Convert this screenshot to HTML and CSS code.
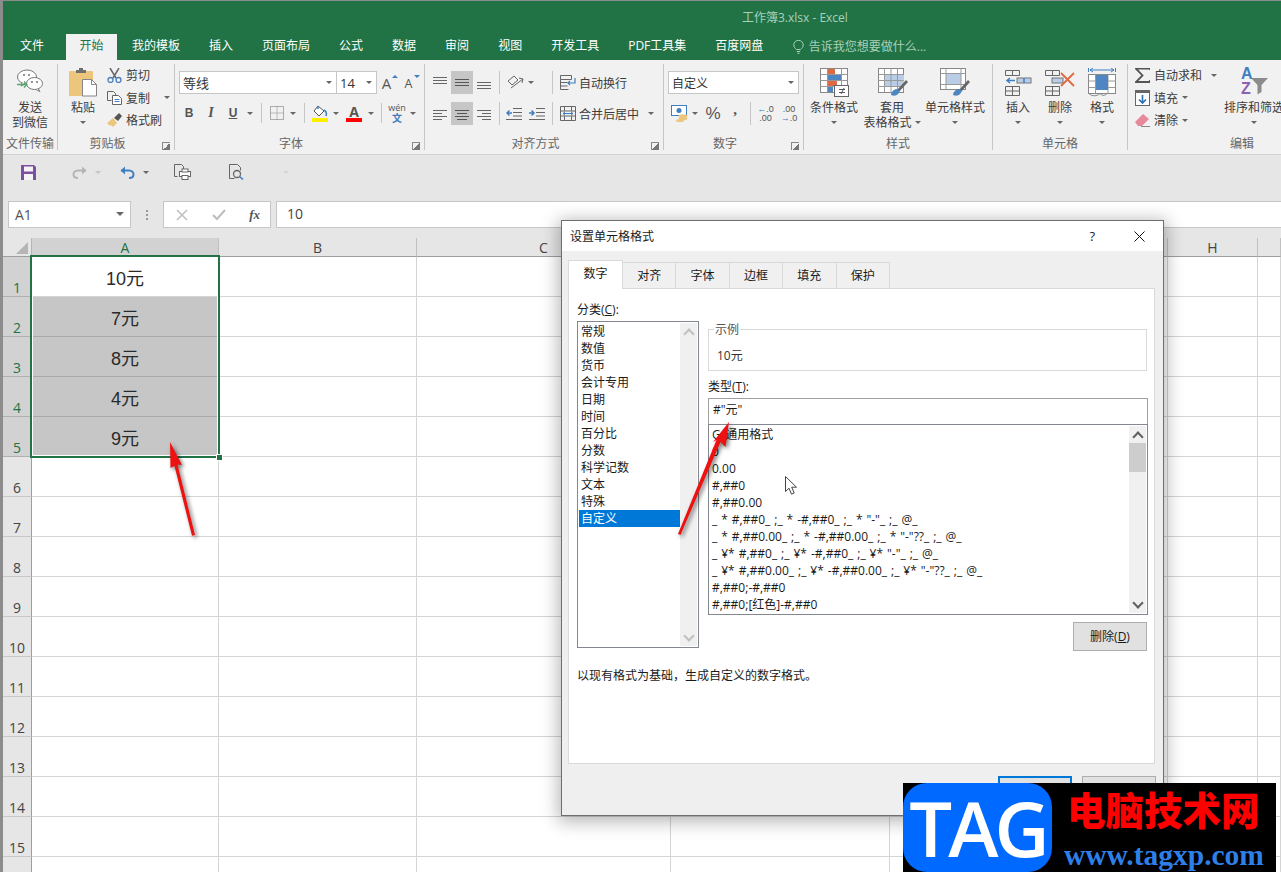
FILE: index.html
```html
<!DOCTYPE html>
<html lang="zh">
<head>
<meta charset="utf-8">
<title>工作簿3.xlsx - Excel</title>
<link rel="stylesheet" href="styles.css">
</head>
<body>
<svg class="sprite" width="0" height="0">
  <symbol id="al-top" viewBox="0 0 14 14"><path d="M0 1.5h14M0 4.5h14M0 7.5h14" stroke="#666" fill="none"/></symbol>
  <symbol id="al-mid" viewBox="0 0 14 14"><path d="M0 3.5h14M0 6.5h14M0 9.5h14" stroke="#555" fill="none"/></symbol>
  <symbol id="al-bot" viewBox="0 0 14 14"><path d="M0 6.5h14M0 9.5h14M0 12.5h14" stroke="#666" fill="none"/></symbol>
  <symbol id="h-left" viewBox="0 0 14 14"><path d="M0 1.5h14M0 4.5h9M0 7.5h14M0 10.5h9" stroke="#666" fill="none"/></symbol>
  <symbol id="h-mid" viewBox="0 0 14 14"><path d="M0 1.5h14M2 4.5h10M0 7.5h14M2 10.5h10" stroke="#555" fill="none"/></symbol>
  <symbol id="h-right" viewBox="0 0 14 14"><path d="M0 1.5h14M5 4.5h9M0 7.5h14M5 10.5h9" stroke="#666" fill="none"/></symbol>
</svg>

<header class="titlebar">工作簿3.xlsx - Excel</header>
<nav class="tabs">
  <span class="tab tab-file">文件</span>
  <span class="tab tab-on">开始</span>
  <span class="tab">我的模板</span>
  <span class="tab">插入</span>
  <span class="tab">页面布局</span>
  <span class="tab">公式</span>
  <span class="tab">数据</span>
  <span class="tab">审阅</span>
  <span class="tab">视图</span>
  <span class="tab">开发工具</span>
  <span class="tab">PDF工具集</span>
  <span class="tab">百度网盘</span>
  <span class="tell">
    <svg width="11" height="14" viewBox="0 0 11 14"><path d="M3.5 9.5C1.5 8 .8 6.5.8 5a4.7 4.7 0 0 1 9.4 0c0 1.5-.7 3-2.7 4.500zM3.800 11.500h3.400M4.500 13.300h2" fill="none" stroke="#a9d0ba"/></svg>
    <span>告诉我您想要做什么...</span>
  </span>
</nav>

<section class="ribbon">
  <div class="group g1">
    <div class="g-body">
      <div class="big w-54">
        <div class="big-icon">
          <svg width="28" height="26" viewBox="0 0 28 26"><ellipse cx="11" cy="8" rx="9.500" ry="7" fill="#fff" stroke="#777"/><path d="M6 14l-1 3 4-2" fill="#fff" stroke="#777"/><ellipse cx="18.500" cy="14.500" rx="8" ry="6" fill="#fff" stroke="#777"/><path d="M22 19.500l2 3-4-2" fill="#fff" stroke="#777"/><circle cx="8" cy="6" r=".9" fill="#666"/><circle cx="13" cy="6" r=".9" fill="#666"/><circle cx="16" cy="13" r=".9" fill="#666"/><circle cx="21" cy="13" r=".9" fill="#666"/><path d="M1 15.500h10M8 12.500l3 3-3 3" fill="none" stroke="#5aa86e" stroke-width="1.300"/></svg>
        </div>
        <span class="lbl">发送</span><span class="lbl">到微信</span>
      </div>
    </div>
    <div class="g-name">文件传输</div>
  </div>

  <div class="group g2">
    <div class="g-body g2-body">
      <div class="big w-42">
        <div class="big-icon">
          <svg width="30" height="30" viewBox="0 0 30 30"><rect x="1" y="4" width="24" height="25" rx="1" fill="#edc67e"/><path d="M8 6V3h3V1h4v2h3v3z" fill="#6f6f6f"/><path d="M14.500 12.500h9l5 5v11.500h-14z" fill="#fff" stroke="#858585"/><path d="M23.500 12.500v5h5" fill="none" stroke="#858585"/></svg>
        </div>
        <span class="lbl">粘贴</span><i class="caret big-caret"></i>
      </div>
      <div class="mini-col">
        <div class="mini"><span class="mini-ic"><svg width="15" height="15" viewBox="0 0 15 15"><path d="M3 0l6 10M12 0L6 10" stroke="#666" stroke-width="1.500" fill="none"/><circle cx="3.500" cy="12" r="2.500" fill="none" stroke="#4a80bd" stroke-width="1.300"/><circle cx="11.500" cy="12" r="2.500" fill="none" stroke="#4a80bd" stroke-width="1.300"/></svg></span><span>剪切</span></div>
        <div class="mini"><span class="mini-ic"><svg width="15" height="14" viewBox="0 0 15 14"><path d="M.5.500h6l2 2v2M.5.500v9h4" fill="none" stroke="#666"/><path d="M5.500 4.500h6l3 3v6h-9z" fill="#fff" stroke="#666"/><path d="M7.500 8.500h5M7.500 10.500h5" stroke="#4a80bd"/></svg></span><span>复制</span><i class="caret caret-copy"></i></div>
        <div class="mini"><span class="mini-ic"><svg width="15" height="14" viewBox="0 0 15 14"><path d="M0 10l6-5 4 5-4 4-2-2-1 1z" fill="#edc67e"/><path d="M7 5l5-5 3 3-4 5z" fill="#555"/></svg></span><span>格式刷</span></div>
      </div>
    </div>
    <div class="g-name">剪贴板<i class="launch"></i></div>
  </div>

  <div class="group g3">
    <div class="g-body col pad-4">
      <div class="r1">
        <span class="combo w-158"><span>等线</span><i class="caret"></i></span>
        <span class="combo combo-next w-41"><span>14</span><i class="caret"></i></span>
        <span class="slot w-22 up"><span class="big-a">A</span><i class="tri-up"></i></span>
        <span class="slot w-22 up"><span class="small-a">A</span><i class="tri-down"></i></span>
      </div>
      <div class="r2 r2-font">
        <span class="slot w-20 ser b">B</span>
        <span class="slot w-24 ser it">I</span>
        <span class="slot w-20 ser b un">U</span>
        <span class="slot w-14"><i class="caret"></i></span>
        <span class="slot w-8"><i class="sep"></i></span>
        <span class="slot w-23"><svg width="14" height="14" viewBox="0 0 14 14"><path d="M.5.500h13v13H.5z" fill="none" stroke="#666" stroke-dasharray="1 1"/><path d="M.5 7h13M7 .5v13" stroke="#888" stroke-dasharray="1 1"/></svg></span>
        <span class="slot w-10"><i class="caret"></i></span>
        <span class="slot w-12"><i class="sep"></i></span>
        <span class="slot w-20"><svg width="16" height="17" viewBox="0 0 16 17"><path d="M6 1l6 5-5 5-5-5z" fill="#fff" stroke="#555"/><path d="M6 1v3M12 5c2 1 3 3 2 6" fill="none" stroke="#3f7fc1" stroke-width="1.500"/><rect y="13" width="16" height="4" fill="#ffee00"/></svg></span>
        <span class="slot w-12"><i class="caret"></i></span>
        <span class="slot w-24"><span class="color-a">A</span></span>
        <span class="slot w-9"><i class="caret"></i></span>
        <span class="slot w-12"><i class="sep"></i></span>
        <span class="slot w-20 wen"><span class="wen-a">wén</span><span class="wen-b">文</span></span>
        <span class="slot w-12"><i class="caret"></i></span>
      </div>
    </div>
    <div class="g-name">字体<i class="launch"></i></div>
  </div>

  <div class="group g4">
    <div class="g-body col pad-4">
      <div class="r1">
        <span class="slot w-22"><svg class="al"><use href="#al-top"/></svg></span>
        <span class="slot w-22 on"><svg class="al"><use href="#al-mid"/></svg></span>
        <span class="slot w-22"><svg class="al"><use href="#al-bot"/></svg></span>
        <span class="slot w-8"><i class="sep"></i></span>
        <span class="slot w-24"><svg width="18" height="15" viewBox="0 0 18 15"><path d="M2 6l6-5 4 4-6 5z" fill="none" stroke="#666"/><path d="M5 13L17 4" stroke="#666"/><path d="M13 3l4 1-1 4" fill="none" stroke="#666"/></svg></span>
        <span class="slot w-8"><i class="caret"></i></span>
        <span class="slot w-13"></span>
        <span class="slot w-8"><i class="sep"></i></span>
        <span class="slot w-23"><svg width="16" height="15" viewBox="0 0 16 15"><path d="M.5.500h11v4H.5zM.5 4.500v10h8M.5 7.500h7M.5 11h7" fill="none" stroke="#666"/><path d="M15 3v5H8M10 6L8 8l2 2" fill="none" stroke="#3f7fc1" stroke-width="1.200"/></svg></span>
        <span class="txt">自动换行</span>
      </div>
      <div class="r2 r2-al">
        <span class="slot w-22"><svg class="al al-l"><use href="#h-left"/></svg></span>
        <span class="slot w-22 on"><svg class="al al-l"><use href="#h-mid"/></svg></span>
        <span class="slot w-22"><svg class="al al-l"><use href="#h-right"/></svg></span>
        <span class="slot w-8"><i class="sep"></i></span>
        <span class="slot w-22"><svg width="16" height="12" viewBox="0 0 16 12"><path d="M7 .5h9M7 4.500h9M7 8h9M0 11.500h16" stroke="#666" fill="none"/><path d="M6 5H1M3.500 2.500L1 5l2.500 2.500" fill="none" stroke="#3f7fc1" stroke-width="1.500"/></svg></span>
        <span class="slot w-23"><svg width="16" height="12" viewBox="0 0 16 12"><path d="M7 .5h9M7 4.500h9M7 8h9M0 11.500h16" stroke="#666" fill="none"/><path d="M0 5h5M2.500 2.500L5 5 2.500 7.500" fill="none" stroke="#3f7fc1" stroke-width="1.500"/></svg></span>
        <span class="slot w-8"><i class="sep"></i></span>
        <span class="slot w-23"><svg width="16" height="15" viewBox="0 0 16 15"><path d="M.5.500h15v14H.5zM.5 5h15M.5 10h15M4.500.5V5M11.500.5V5M4.500 10v4.500M11.500 10v4.500" fill="none" stroke="#666"/><path d="M3 7.500h10M5 6L3 7.500 5 9M11 6l2 1.500L11 9" fill="none" stroke="#3f7fc1"/></svg></span>
        <span class="txt">合并后居中</span>
        <span class="slot w-24"><i class="caret"></i></span>
      </div>
    </div>
    <div class="g-name">对齐方式<i class="launch"></i></div>
  </div>

  <div class="group g5">
    <div class="g-body col pad-4">
      <div class="r1"><span class="combo w-131"><span class="combo-cus">自定义</span><i class="caret"></i></span></div>
      <div class="r2 r2-al">
        <span class="slot w-22"><svg width="17" height="17" viewBox="0 0 17 17"><rect x=".5" y=".5" width="15" height="10" fill="#fff" stroke="#3f7fc1"/><circle cx="8" cy="5.500" r="2.500" fill="#3f7fc1"/><ellipse cx="12" cy="11" rx="4.500" ry="1.800" fill="#edc67e"/><ellipse cx="12" cy="13.500" rx="4.500" ry="1.800" fill="#edc67e"/><ellipse cx="9" cy="15.500" rx="4" ry="1.500" fill="#edc67e"/></svg></span>
        <span class="slot w-10"><i class="caret"></i></span>
        <span class="slot w-26 pct">%</span>
        <span class="slot w-18 comma">,</span>
        <span class="slot w-12"><i class="sep"></i></span>
        <span class="slot w-19 dec"><span><b class="ar">←</b>.0</span><span>.00</span></span>
        <span class="slot w-28 dec"><span>.00</span><span><b class="ar">→</b>.0</span></span>
      </div>
    </div>
    <div class="g-name">数字<i class="launch"></i></div>
  </div>

  <div class="group g6">
    <div class="g-body">
      <div class="big w-60">
        <div class="big-icon"><svg width="29" height="29" viewBox="0 0 29 29"><rect x=".5" y=".5" width="27" height="24" fill="#fff" stroke="#888"/><path d="M.5 6.500h27M.5 12.500h27M.5 18.500h27M7.500.5v24M21.500.5v24" stroke="#999"/><rect x="8" y="1" width="7" height="5" fill="#de6a43"/><rect x="8" y="7" width="13" height="5" fill="#4f86c2"/><rect x="8" y="13" width="9" height="5" fill="#de6a43"/><rect x="8" y="19" width="5" height="5" fill="#4f86c2"/><rect x="14.500" y="17.500" width="14" height="11" fill="#fff" stroke="#666"/><path d="M19 21.500h6M19 24.500h6M24 20l-3 6" stroke="#555" fill="none"/></svg></div>
        <span class="lbl">条件格式</span><i class="caret big-caret"></i>
      </div>
      <div class="big w-56">
        <div class="big-icon icon-shift"><svg width="30" height="29" viewBox="0 0 30 29"><rect x=".5" y=".5" width="25" height="24" fill="#fff" stroke="#888"/><rect x="7" y="7" width="19" height="12" fill="#b9cee6"/><path d="M.5 6.500h25M.5 12.500h25M.5 18.500h25M6.500.5v24M13 .5v24M19.500.5v24" stroke="#999"/><path d="M19 22l9-10 2 2-9 10z" fill="#666"/><path d="M13 27c0-3 3-6 6-6s3 3 1 5-4 2-7 1z" fill="#4f86c2"/></svg></div>
        <span class="lbl">套用</span>
        <span class="lbl lbl-row">表格格式<i class="caret"></i></span>
      </div>
      <div class="big w-70">
        <div class="big-icon"><svg width="30" height="29" viewBox="0 0 30 29"><rect x=".5" y=".5" width="25" height="21" fill="#fff" stroke="#888"/><rect x="6" y="5" width="15" height="12" fill="#b9cee6"/><path d="M.5 5.500h25M.5 16.500h25M6 .5v21M21 .5v21" stroke="#999"/><path d="M19 22l9-10 2 2-9 10z" fill="#666"/><path d="M13 27c0-3 3-6 6-6s3 3 1 5-4 2-7 1z" fill="#4f86c2"/></svg></div>
        <span class="lbl">单元格样式</span><i class="caret big-caret"></i>
      </div>
    </div>
    <div class="g-name">样式</div>
  </div>

  <div class="group g7">
    <div class="g-body pad-4">
      <div class="big w-42">
        <div class="big-icon"><svg width="27" height="27" viewBox="0 0 27 27"><path d="M.5 1.500h7v5h-7zM7.500 1.500h7v5h-7zM.5 17.500h14v9H.5zM.5 22h14M7.500 17.500v9" fill="none" stroke="#666"/><rect x="12" y="9" width="14" height="5" fill="#b9cee6" stroke="#777"/><path d="M19 9v5M10 11.500H2M5 9l-3 2.500L5 14" fill="none" stroke="#3f7fc1" stroke-width="1.500"/></svg></div>
        <span class="lbl">插入</span><i class="caret big-caret"></i>
      </div>
      <div class="big w-42">
        <div class="big-icon"><svg width="30" height="27" viewBox="0 0 30 27"><path d="M.5 1.500h7v5h-7zM7.500 1.500h7v5h-7zM.5 17.500h14v9H.5zM.5 22h14M7.500 17.500v9" fill="none" stroke="#666"/><rect x="7" y="9" width="11" height="5" fill="#b9cee6" stroke="#777"/><path d="M16 4l13 13M29 4L16 17" stroke="#de6a43" stroke-width="1.800"/></svg></div>
        <span class="lbl">删除</span><i class="caret big-caret"></i>
      </div>
      <div class="big w-42">
        <div class="big-icon"><svg width="28" height="29" viewBox="0 0 28 29"><path d="M.5 0v4M27.500 0v4M2 2h24M5 0L2 2l3 2M23 0l3 2-3 2" fill="none" stroke="#3f7fc1"/><rect x=".5" y="6.500" width="27" height="19" fill="#fff" stroke="#888"/><path d="M.5 13h27M.5 19.500h27M7.500 6.500v19M20 6.500v19" stroke="#999"/><rect x="8" y="7" width="12" height="15" fill="#4f86c2"/><path d="M1 25.500c3 3 8 3 11 0 3 3 5 2 7 0" fill="none" stroke="#888"/></svg></div>
        <span class="lbl">格式</span><i class="caret big-caret"></i>
      </div>
    </div>
    <div class="g-name">单元格</div>
  </div>

  <div class="group g8">
    <div class="g-body">
      <div class="mini-col edit-col">
        <div class="mini"><span class="mini-ic"><svg width="15" height="15" viewBox="0 0 15 15"><path d="M15 2V.7H1l6.500 6.800L1 14h14v-2" fill="none" stroke="#555" stroke-width="1.800"/></svg></span><span>自动求和</span><span class="slot w-24"><i class="caret"></i></span></div>
        <div class="mini"><span class="mini-ic"><svg width="15" height="16" viewBox="0 0 15 16"><rect x=".5" y=".5" width="14" height="15" fill="#fff" stroke="#666"/><rect width="15" height="3" fill="#666"/><path d="M7.500 5v8M4 9.500l3.500 3.500 3.500-3.500" fill="none" stroke="#2f6fb3" stroke-width="1.600"/></svg></span><span>填充</span><span class="slot w-14"><i class="caret"></i></span></div>
        <div class="mini"><span class="mini-ic"><svg width="15" height="13" viewBox="0 0 15 13"><path d="M0 8l8-8 6 5-7 7H3z" fill="#e8899b"/><path d="M6 12.500h9" stroke="#888"/></svg></span><span>清除</span><span class="slot w-14"><i class="caret"></i></span></div>
      </div>
      <div class="big w-60">
        <div class="big-icon"><svg width="30" height="29" viewBox="0 0 30 29"><path d="M12 10h17l-6.500 7v7l-4 2.500V17z" fill="#8c8c8c"/></svg><span class="az"><span class="az-a">A</span><span class="az-z">Z</span></span></div>
        <span class="lbl">排序和筛选</span><i class="caret big-caret"></i>
      </div>
    </div>
    <div class="g-name name-edit">编辑</div>
  </div>
</section>

<section class="qat">
  <svg class="q-save" width="15" height="15" viewBox="0 0 15 15"><path d="M0 0h13l2 2v13H0z" fill="#7e4fa0"/><rect x="3" y="1.500" width="9" height="5" fill="#f4f4f4"/><rect x="3" y="9" width="9" height="6" fill="#f4f4f4"/></svg>
  <svg class="q-redo" width="15" height="13" viewBox="0 0 15 13"><path d="M14 4.500H6C3 4.500 1.500 6.500 1.500 8.500S3 12 6 12" fill="none" stroke="#b5b5b5" stroke-width="2"/><path d="M10 .5l4.500 4-4.500 4z" fill="#b5b5b5"/></svg>
  <i class="caret q-car q-car-off"></i>
  <svg class="q-undo" width="15" height="13" viewBox="0 0 15 13"><path d="M1 4.500h8c3 0 4.500 2 4.500 4S12 12 9 12" fill="none" stroke="#3f7fc1" stroke-width="2"/><path d="M5 .5L.5 4.500l4.500 4z" fill="#3f7fc1"/></svg>
  <i class="caret q-car"></i>
  <svg class="q-print" width="17" height="16" viewBox="0 0 17 16"><path d="M.5.500h7l2 2v4M.5.500v12h3" fill="none" stroke="#666"/><rect x="5.500" y="7.500" width="11" height="5" fill="#fff" stroke="#666"/><rect x="8" y="5" width="6" height="3" fill="#fff" stroke="#666"/><rect x="8" y="11.500" width="6" height="4" fill="#fff" stroke="#666"/></svg>
  <svg class="q-find" width="15" height="16" viewBox="0 0 15 16"><path d="M.5.500h8l3 3v3M.5.500v14h5" fill="none" stroke="#666"/><circle cx="8" cy="10" r="3.500" fill="#e6e6e6" stroke="#666" stroke-width="1.300"/><path d="M10.500 12.500L14 15.500" stroke="#3f7fc1" stroke-width="1.600"/></svg>
  <i class="caret q-more"></i>
</section>

<section class="fbar">
  <div class="namebox"><span>A1</span><i class="caret"></i></div>
  <div class="fdots"><i></i><i></i><i></i></div>
  <div class="fbtns">
    <svg width="12" height="12" viewBox="0 0 12 12"><path d="M1 1l10 10M11 1L1 11" stroke="#bdbdbd" stroke-width="1.500"/></svg>
    <svg width="14" height="12" viewBox="0 0 14 12"><path d="M1 6l4 4 8-9" fill="none" stroke="#bdbdbd" stroke-width="2"/></svg>
    <span class="fx">fx</span>
  </div>
  <div class="finput">10</div>
</section>

<section class="sheet">
  <div class="corner"><svg width="12" height="12" viewBox="0 0 12 12"><path d="M12 0v12H0z" fill="#b5b5b5"/></svg></div>
  <div class="ch ch-on">A</div><div class="ch">B</div><div class="ch">C</div><div class="ch">D</div><div class="ch">E</div><div class="ch">F</div><div class="ch">G</div><div class="ch">H</div><div class="ch"></div>

  <div class="rh rh-on">1</div><div class="c val">10元</div><i class="c"></i><i class="c"></i><i class="c"></i><i class="c"></i><i class="c"></i><i class="c"></i><i class="c"></i><i class="c"></i>
  <div class="rh rh-on">2</div><div class="c val shade">7元</div><i class="c"></i><i class="c"></i><i class="c"></i><i class="c"></i><i class="c"></i><i class="c"></i><i class="c"></i><i class="c"></i>
  <div class="rh rh-on">3</div><div class="c val shade">8元</div><i class="c"></i><i class="c"></i><i class="c"></i><i class="c"></i><i class="c"></i><i class="c"></i><i class="c"></i><i class="c"></i>
  <div class="rh rh-on">4</div><div class="c val shade">4元</div><i class="c"></i><i class="c"></i><i class="c"></i><i class="c"></i><i class="c"></i><i class="c"></i><i class="c"></i><i class="c"></i>
  <div class="rh rh-on">5</div><div class="c val shade">9元</div><i class="c"></i><i class="c"></i><i class="c"></i><i class="c"></i><i class="c"></i><i class="c"></i><i class="c"></i><i class="c"></i>
  <div class="rh">6</div><i class="c"></i><i class="c"></i><i class="c"></i><i class="c"></i><i class="c"></i><i class="c"></i><i class="c"></i><i class="c"></i><i class="c"></i>
  <div class="rh">7</div><i class="c"></i><i class="c"></i><i class="c"></i><i class="c"></i><i class="c"></i><i class="c"></i><i class="c"></i><i class="c"></i><i class="c"></i>
  <div class="rh">8</div><i class="c"></i><i class="c"></i><i class="c"></i><i class="c"></i><i class="c"></i><i class="c"></i><i class="c"></i><i class="c"></i><i class="c"></i>
  <div class="rh">9</div><i class="c"></i><i class="c"></i><i class="c"></i><i class="c"></i><i class="c"></i><i class="c"></i><i class="c"></i><i class="c"></i><i class="c"></i>
  <div class="rh">10</div><i class="c"></i><i class="c"></i><i class="c"></i><i class="c"></i><i class="c"></i><i class="c"></i><i class="c"></i><i class="c"></i><i class="c"></i>
  <div class="rh">11</div><i class="c"></i><i class="c"></i><i class="c"></i><i class="c"></i><i class="c"></i><i class="c"></i><i class="c"></i><i class="c"></i><i class="c"></i>
  <div class="rh">12</div><i class="c"></i><i class="c"></i><i class="c"></i><i class="c"></i><i class="c"></i><i class="c"></i><i class="c"></i><i class="c"></i><i class="c"></i>
  <div class="rh">13</div><i class="c"></i><i class="c"></i><i class="c"></i><i class="c"></i><i class="c"></i><i class="c"></i><i class="c"></i><i class="c"></i><i class="c"></i>
  <div class="rh">14</div><i class="c"></i><i class="c"></i><i class="c"></i><i class="c"></i><i class="c"></i><i class="c"></i><i class="c"></i><i class="c"></i><i class="c"></i>
  <div class="rh">15</div><i class="c"></i><i class="c"></i><i class="c"></i><i class="c"></i><i class="c"></i><i class="c"></i><i class="c"></i><i class="c"></i><i class="c"></i>
  <div class="rh"></div><i class="c"></i><i class="c"></i><i class="c"></i><i class="c"></i><i class="c"></i><i class="c"></i><i class="c"></i><i class="c"></i><i class="c"></i>

  <div class="selection"><i class="handle"></i></div>
</section>

<div class="dialog">
  <div class="d-title">
    <span class="d-name">设置单元格格式</span>
    <span class="d-help">?</span>
    <svg class="d-close" width="11" height="11" viewBox="0 0 11 11"><path d="M.5.500l10 10M10.500.5l-10 10" stroke="#111" fill="none"/></svg>
  </div>
  <div class="d-body">
    <div class="d-tabs">
      <span class="d-tab d-tab-on">数字</span>
      <span class="d-tab">对齐</span>
      <span class="d-tab">字体</span>
      <span class="d-tab">边框</span>
      <span class="d-tab">填充</span>
      <span class="d-tab">保护</span>
    </div>
    <div class="pane">
      <div class="pane-cols">
        <div class="left">
          <div class="lab">分类(<u>C</u>):</div>
          <div class="catlist">
            <div class="cat-items">
              <div>常规</div><div>数值</div><div>货币</div><div>会计专用</div><div>日期</div><div>时间</div><div>百分比</div><div>分数</div><div>科学记数</div><div>文本</div><div>特殊</div><div class="cat-on">自定义</div>
            </div>
            <div class="vscroll off"><i class="chev up-c"></i><span class="fill"></span><i class="chev down-c"></i></div>
          </div>
        </div>
        <div class="right">
          <div class="sample"><span class="legend">示例</span>10元</div>
          <div class="lab lab-type">类型(<u>T</u>):</div>
          <div class="typein">#"元"</div>
          <div class="fmtlist">
            <div class="fmt-items">
              <div>G/通用格式</div><div>0</div><div>0.00</div><div>#,##0</div><div>#,##0.00</div>
              <div>_ * #,##0_ ;_ * -#,##0_ ;_ * "-"_ ;_ @_ </div>
              <div>_ * #,##0.00_ ;_ * -#,##0.00_ ;_ * "-"??_ ;_ @_ </div>
              <div>_ ¥* #,##0_ ;_ ¥* -#,##0_ ;_ ¥* "-"_ ;_ @_ </div>
              <div>_ ¥* #,##0.00_ ;_ ¥* -#,##0.00_ ;_ ¥* "-"??_ ;_ @_ </div>
              <div>#,##0;-#,##0</div><div>#,##0;[红色]-#,##0</div>
            </div>
            <div class="vscroll"><i class="chev up-c"></i><span class="thumb"></span><span class="fill"></span><i class="chev down-c"></i></div>
          </div>
          <div class="btn btn-del">删除(<u>D</u>)</div>
        </div>
      </div>
      <div class="desc">以现有格式为基础，生成自定义的数字格式。</div>
    </div>
    <div class="d-foot"><div class="btn btn-ok"></div><div class="btn"></div></div>
  </div>
</div>

<svg class="overlay" width="1281" height="872" viewBox="0 0 1281 872">
  <g class="arrows">
    <polygon points="170,442 182,465 177.500,464.500 195,535 192,535.800 174.500,466 170.500,468" fill="#ee1111"/>
    <polygon points="729,422 725.500,447 720.500,442 680.500,535 678,534 716.500,440 713,442" fill="#ee1111"/>
  </g>
  <path d="M785.500 476.500v15l3.500-3.300 2.500 6 2.700-1.200-2.500-5.800h4.800z" fill="#fff" stroke="#444"/>
</svg>

<div class="mark">
  <div class="mark-logo">TAG</div>
  <div class="mark-text">
    <div class="mark-cn">电脑技术网</div>
    <div class="mark-url">www.tagxp.com</div>
  </div>
</div>
</body>
</html>
```

FILE: styles.css
```css
* { box-sizing: border-box; }
html, body { margin: 0; padding: 0; }
body {
  position: relative;
  width: 1281px;
  height: 872px;
  overflow: hidden;
  padding: 1px 0 0 3px;
  background: #8c8c8c;
  font-family: "Open Sans", "Noto Sans CJK SC", sans-serif;
  font-size: 12px;
  color: #3c3c3c;
}
i { font-style: normal; }
.sprite { position: absolute; }

.titlebar {
  height: 33px;
  padding: 9px 0 0 739px;
  background: #217346;
  color: #a9d0ba;
  line-height: 16px;
  white-space: nowrap;
}
.tabs {
  display: flex;
  height: 26px;
  padding-left: 2.5px;
  background: #217346;
  color: #fff;
  line-height: 24px;
  white-space: nowrap;
}
.tab { padding: 0 14.5px; }
.tab-file { padding-right: 22px; }
.tab-on { padding: 0 13.5px; margin-right: 0.5px; background: #f1f1f1; color: #217346; }
.tell { display: flex; align-items: center; gap: 5px; margin-left: 15px; padding-top: 1px; color: #a9d0ba; height: 24px; }

.ribbon {
  display: flex;
  height: 95px;
  padding-top: 4px;
  background: #f1f1f1;
  border-bottom: 1px solid #d2d2d2;
  white-space: nowrap;
}
.group { position: relative; display: flex; flex-direction: column; height: 86px; border-right: 1px solid #c6c6c6; flex: none; }
.g1 { width: 55px; }
.g2 { width: 117px; }
.g3 { width: 250px; }
.g4 { width: 239px; }
.g5 { width: 140px; }
.g6 { width: 189px; }
.g7 { width: 135px; }
.g8 { width: 153px; border-right: 0; }
.g-body { display: flex; height: 74px; }
.g2-body { padding-left: 4px; gap: 3px; }
.col { flex-direction: column; }
.pad-4 { padding-left: 4px; }
.g-name { position: relative; height: 12px; line-height: 12px; text-align: center; color: #666; }
.g2 .g-name, .g3 .g-name, .g4 .g-name, .g5 .g-name { padding-right: 17px; }
.name-edit { text-align: left; text-indent: 102px; }
.launch {
  position: absolute; right: 4px; top: 4px; width: 8px; height: 8px;
  border-left: 1px solid #888; border-top: 1px solid #888;
  background: linear-gradient(135deg, transparent 50%, #777 50%);
}

.big { display: flex; flex-direction: column; align-items: center; flex: none; }
.big-icon { position: relative; display: flex; align-items: center; justify-content: center; height: 36px; }
.icon-shift { padding-left: 2px; }
.lbl { line-height: 15px; white-space: nowrap; }
.lbl-row { display: flex; align-items: center; gap: 3px; }
.big-caret { margin-top: 6px; }
.caret {
  display: inline-block; flex: none; width: 0; height: 0;
  border-left: 3px solid transparent; border-right: 3px solid transparent; border-top: 3px solid #666;
}
.mini-col { display: flex; flex-direction: column; }
.mini { display: flex; align-items: center; height: 22.5px; }
.mini-ic { display: flex; align-items: center; width: 19px; flex: none; }
.caret-copy { margin-left: 14px; }
.edit-col { width: 89px; margin-left: 7px; flex: none; }

.r1 { display: flex; align-items: stretch; height: 23px; margin-top: 7px; }
.r2 { display: flex; align-items: stretch; }
.r2-font { height: 20px; margin-top: 9px; }
.r2-al { height: 23px; margin-top: 8px; }
.slot { display: flex; align-items: center; justify-content: center; flex: none; position: relative; }
.txt { display: flex; align-items: center; flex: none; }
.on { background: #c6c6c6; }
.sep { display: block; width: 1px; height: 100%; background: #c6c6c6; }
.al { width: 14px; height: 14px; margin-top: 1px; }
.al-l { margin-top: 4px; }

.w-8 { width: 8px; } .w-9 { width: 9px; } .w-10 { width: 10px; } .w-12 { width: 12px; } .w-13 { width: 13px; }
.w-14 { width: 14px; } .w-18 { width: 18px; } .w-19 { width: 19px; } .w-20 { width: 20px; } .w-22 { width: 22px; }
.w-23 { width: 23px; } .w-24 { width: 24px; } .w-26 { width: 26px; } .w-28 { width: 28px; }
.w-41 { width: 41px; } .w-42 { width: 42px; } .w-54 { width: 54px; } .w-56 { width: 56px; } .w-60 { width: 60px; }
.w-70 { width: 70px; } .w-131 { width: 131px; } .w-158 { width: 158px; }

.combo {
  display: flex; align-items: center; justify-content: space-between; flex: none;
  height: 23px; padding: 0 4px 0 3px; background: #fff; border: 1px solid #c6c6c6;
  font-size: 13px; color: #333;
}
.combo-next { margin-left: -1px; }
.combo-cus { font-size: 12px; }
.big-a { font-size: 15px; color: #555; padding-right: 3px; }
.small-a { font-size: 12.5px; color: #555; padding-top: 2px; padding-right: 3px; }
.tri-up { position: absolute; right: 1px; top: 4px; border: 3px solid transparent; border-top: 0; border-bottom: 3px solid #3f7fc1; }
.tri-down { position: absolute; right: 1px; top: 4px; border: 3px solid transparent; border-bottom: 0; border-top: 3px solid #3f7fc1; }
.ser { font-family: "Liberation Serif", serif; font-size: 14px; color: #555; }
.b { font-family: "Liberation Sans", sans-serif; font-weight: 700; font-size: 12px; }
.it { font-style: italic; font-weight: 700; }
.un { text-decoration: underline; }
.color-a { display: block; width: 16px; height: 17px; border-bottom: 4px solid #ff0000; color: #555; font-size: 14px; font-weight: 700; line-height: 13px; text-align: center; }
.wen { flex-direction: column; }
.wen-a { font-size: 9px; line-height: 10px; color: #555; }
.wen-b { font-size: 10px; line-height: 11px; color: #3f7fc1; font-weight: 700; }
.pct { font-size: 17px; color: #555; font-family: "Liberation Sans", sans-serif; }
.comma { font-size: 15px; font-weight: 700; color: #555; font-family: "Liberation Serif", serif; padding-bottom: 8px; }
.dec { flex-direction: column; font-size: 9px; line-height: 9px; color: #555; font-family: "Liberation Sans", sans-serif; }
.ar { color: #3f7fc1; font-weight: 700; }
.az { position: absolute; left: 2px; top: 2px; display: flex; flex-direction: column; line-height: 15px; font-size: 16px; font-weight: 700; font-family: "Liberation Sans", sans-serif; }
.az-a { color: #3f7fc1; }
.az-z { color: #8e5fb5; }

.qat { position: relative; display: flex; align-items: center; height: 45px; padding-bottom: 11px; background: #e6e6e6; }
.q-save { margin-left: 18px; }
.q-redo { margin-left: 36px; }
.q-car { margin-left: 8px; }
.q-car-off { border-top-color: #c4c4c4; }
.q-undo { margin-left: 19px; }
.q-print { margin-left: 25px; }
.q-find { margin-left: 38px; }
.q-more { margin-left: 39px; border-top-color: #d4d4d4; }

.fbar { display: flex; height: 38px; padding-top: 1px; align-items: flex-start; background: #e6e6e6; }
.namebox {
  display: flex; align-items: center; justify-content: space-between;
  width: 123px; height: 27px; margin-left: 5px; padding: 0 6px 1px 6px;
  background: #fff; border: 1px solid #c6c6c6; font-size: 14px; color: #555; flex: none;
}
.namebox .caret { border-left-width: 4px; border-right-width: 4px; border-top-width: 4px; }
.fdots { display: flex; flex-direction: column; align-items: center; justify-content: center; gap: 2px; width: 32px; height: 27px; flex: none; }
.fdots i { display: block; width: 2px; height: 2px; background: #999; }
.fbtns {
  display: flex; align-items: center; justify-content: space-between;
  width: 108px; height: 27px; padding: 0 10px 0 12px; background: #fff; border: 1px solid #c6c6c6; flex: none;
}
.fx { font-family: "Liberation Serif", serif; font-style: italic; font-weight: 700; font-size: 13px; color: #555; }
.finput { flex: 1; height: 27px; margin-left: 5px; padding-left: 10px; background: #fff; border: 1px solid #c6c6c6; border-right: 0; font-size: 14px; line-height: 23px; color: #444; }

.sheet {
  position: relative;
  display: grid;
  grid-template-columns: 29px 187px 198px 254px 219px 92px 93px 93px 90px 23px;
  grid-template-rows: 19px;
  grid-auto-rows: 40px;
  background: #fff;
}
.corner { display: flex; align-items: flex-end; justify-content: flex-end; padding: 0 3px 2px 0; background: #e6e6e6; border-right: 1px solid #b5b5b5; border-bottom: 1px solid #9e9e9e; }
.ch { background: #e6e6e6; border-right: 1px solid #c0c0c0; border-bottom: 1px solid #9e9e9e; text-align: center; font-size: 14px; line-height: 20px; color: #444; }
.ch-on { background: #d2d2d2; color: #217346; }
.rh { background: #e6e6e6; border-right: 1px solid #9e9e9e; border-bottom: 1px solid #c8c8c8; text-align: center; font-size: 14px; line-height: 19px; padding-top: 21px; color: #444; }
.rh-on { background: #d2d2d2; color: #217346; border-bottom-color: #b0b0b0; }
.c { display: block; border-right: 1px solid #d4d4d4; border-bottom: 1px solid #d4d4d4; }
.val { font-family: "Liberation Sans", "Noto Sans CJK SC", sans-serif; font-size: 18px; line-height: 24px; padding-top: 10px; text-align: center; color: #2a2a2a; }
.shade { background: #c6c6c6; border-bottom-color: #a9a9a9; }
.selection {
  position: absolute; left: 27px; top: 17px; width: 190px; height: 203px;
  border: 2px solid #217346; box-shadow: inset 0 0 0 1px #fff;
}
.handle { position: absolute; right: -5px; bottom: -5px; width: 5px; height: 5px; background: #217346; border: 1px solid #fff; box-sizing: content-box; }

.dialog {
  position: absolute; left: 561px; top: 220px; width: 603px; height: 596px;
  background: #fff; border: 1px solid #6e6e6e;
  box-shadow: 0 3px 16px 3px rgba(0, 0, 0, 0.28);
  color: #1a1a1a;
}
.d-title { display: flex; align-items: center; height: 30px; padding-left: 8px; background: #fff; }
.d-name { flex: 1; }
.d-help { margin-right: 39px; font-size: 13px; }
.d-close { margin-right: 18px; }
.d-body { height: 564px; padding: 9px 8px 0 6px; background: #efefef; }
.d-tabs { display: flex; height: 28px; }
.d-tab { width: 53.4px; height: 26px; margin-top: 2px; background: #f0f0f0; border: 1px solid #d9d9d9; border-left: 0; border-bottom: 0; text-align: center; line-height: 26px; }
.d-tab-on { position: relative; z-index: 1; width: 55px; height: 29px; margin-top: 0; background: #fff; border-left: 1px solid #d9d9d9; }
.pane { width: 587px; height: 476px; background: #fff; border: 1px solid #d9d9d9; padding-left: 8px; }
.pane-cols { display: flex; gap: 9px; }
.left { width: 122px; padding-top: 12px; flex: none; }
.lab { line-height: 17px; }
.catlist { display: flex; height: 327px; margin-top: 3px; background: #fff; border: 1px solid #828790; padding: 1px; }
.cat-items { flex: 1; line-height: 17px; }
.cat-items > div { padding-left: 2px; }
.cat-on { background: #0078d7; color: #fff; }
.vscroll { display: flex; flex-direction: column; align-items: stretch; width: 17px; background: #f0f0f0; flex: none; }
.chev { position: relative; display: block; height: 17px; flex: none; }
.chev::after { content: ""; position: absolute; left: 5px; width: 6px; height: 6px; border: 2px solid #606060; border-width: 2px 0 0 2px; transform: rotate(45deg); top: 7px; }
.down-c::after { transform: rotate(225deg); top: 3px; }
.off .chev::after { border-color: #c0c0c0; }
.fill { flex: 1; }
.thumb { height: 29px; background: #cdcdcd; flex: none; }
.right { width: 440px; padding-top: 40px; display: flex; flex-direction: column; flex: none; }
.sample { position: relative; height: 42px; padding: 17px 0 0 8px; border: 1px solid #d9d9d9; line-height: 17px; width: 439px; color: #333; }
.legend { position: absolute; left: 5px; top: -9px; background: #fff; padding: 0 1px; color: #555; line-height: 17px; }
.lab-type { margin-top: 7px; }
.typein { height: 27px; margin-top: 3px; padding-left: 4px; border: 1px solid #a0a0a0; background: #fff; line-height: 22px; }
.fmtlist { display: flex; height: 191px; margin-top: -1px; background: #fff; border: 1px solid #828790; padding: 1px; }
.fmt-items { flex: 1; padding: 0 0 0 2px; line-height: 17.05px; overflow: hidden; }
.fmt-items > div { white-space: pre; word-spacing: 0.85px; }
.btn { width: 74px; height: 29px; background: #e1e1e1; border: 1px solid #adadad; text-align: center; line-height: 27px; color: #1a1a1a; }
.btn-del { align-self: flex-end; margin: 7px 1px 0 0; }
.btn-ok { border: 2px solid #0078d7; line-height: 25px; }
.desc { margin-top: 16px; line-height: 17px; }
.d-foot { display: flex; justify-content: flex-end; gap: 10px; margin: 12px -1px 0 0; }

.overlay { position: absolute; left: 0; top: 0; pointer-events: none; }
.arrows { filter: drop-shadow(2px 2px 2px rgba(0, 0, 0, 0.55)); }

.mark { position: absolute; left: 903px; top: 783px; display: flex; width: 373px; height: 89px; background: #000; }
.mark-logo {
  display: flex; align-items: center; justify-content: center; width: 149px; height: 89px;
  background: #0069ff; border-radius: 24px; color: #fff;
  font-family: "Open Sans", sans-serif; font-weight: 600; font-size: 76px; letter-spacing: -4px;
}
.mark-text { padding-left: 15px; }
.mark-cn { font-family: "Noto Sans CJK SC", sans-serif; font-weight: 900; font-size: 38.5px; line-height: 50px; color: #ff0000; white-space: nowrap; }
.mark-url { font-family: "Liberation Serif", serif; font-weight: 700; font-size: 29.5px; line-height: 32px; margin: 6px 0 0 -3px; color: #2f7fe8; white-space: nowrap; }
```
